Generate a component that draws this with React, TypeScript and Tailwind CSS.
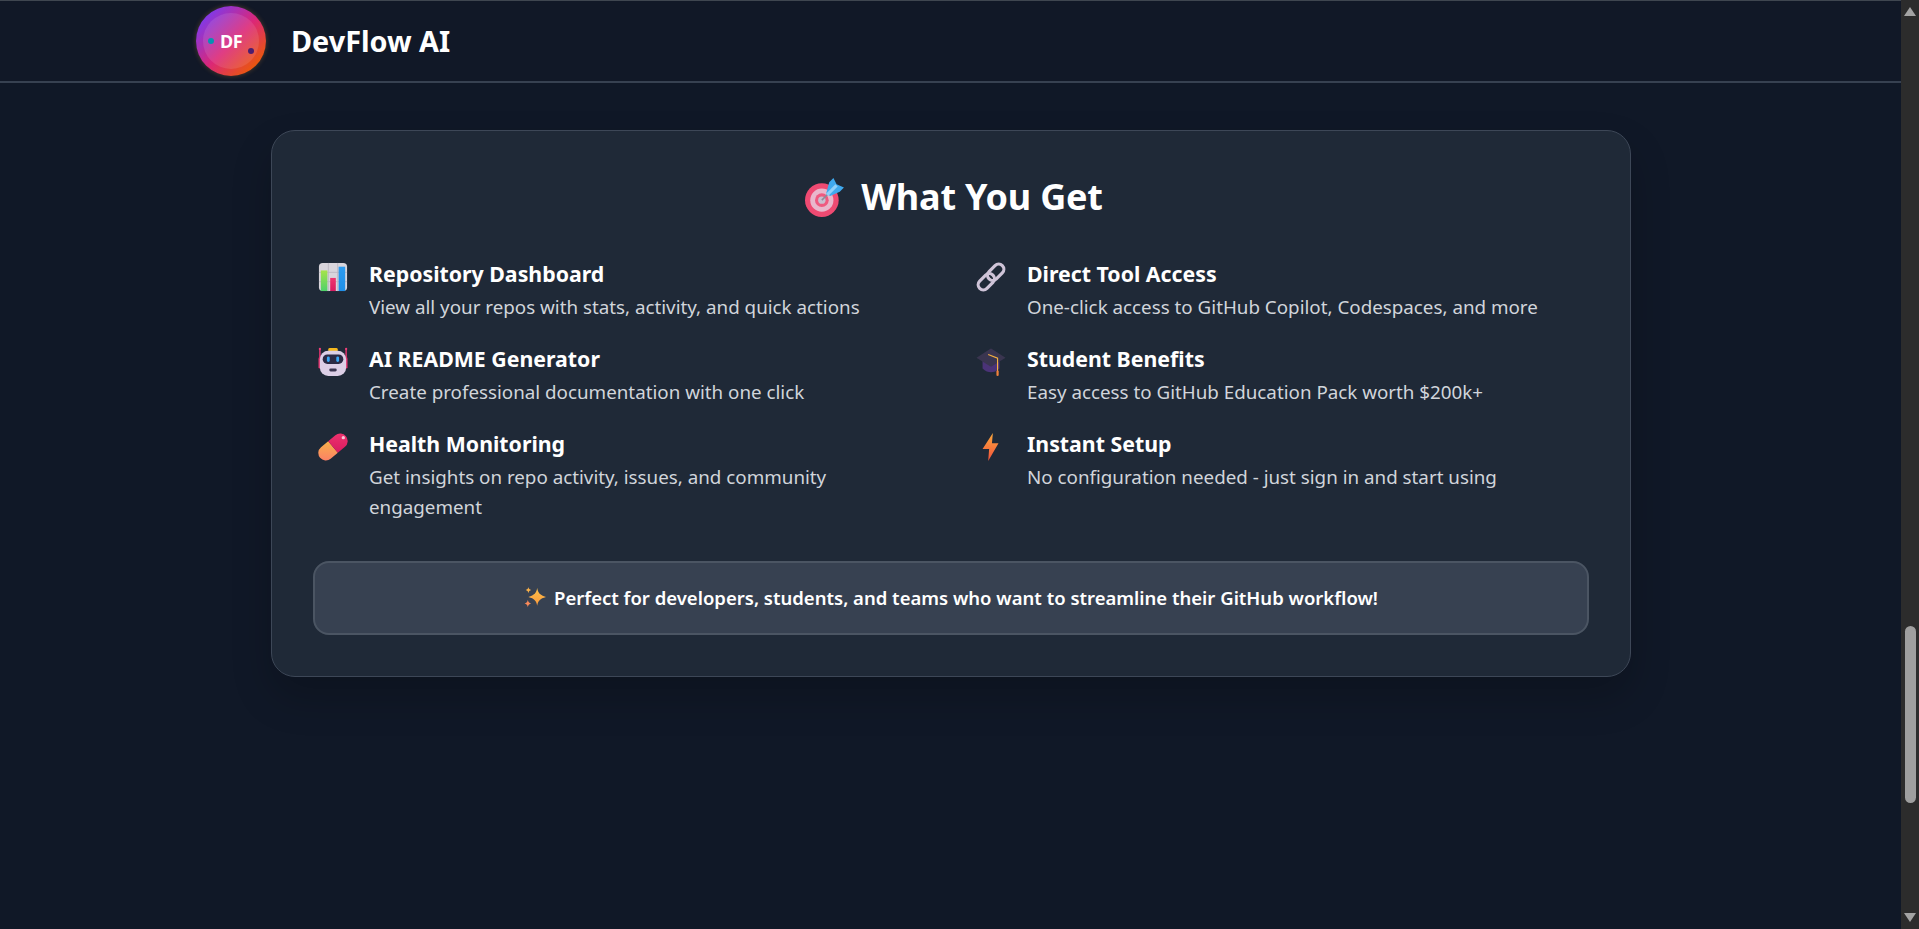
import React from "react";

const ChartIcon = () => (
  <svg width="30" height="30" viewBox="0 0 32 32">
    <rect x="1" y="1" width="30" height="30" rx="4" fill="#d9d5dc" />
    <path d="M1 11h30M1 21h30M11 1v30M21 1v30" stroke="#bdb8c2" strokeWidth="1" />
    <defs>
      <linearGradient id="g1" x1="0" y1="0" x2="0" y2="1"><stop offset="0" stopColor="#a6e34a" /><stop offset="1" stopColor="#4fd16a" /></linearGradient>
      <linearGradient id="g2" x1="0" y1="0" x2="0" y2="1"><stop offset="0" stopColor="#f0356f" /><stop offset="1" stopColor="#d81b60" /></linearGradient>
      <linearGradient id="g3" x1="0" y1="0" x2="0" y2="1"><stop offset="0" stopColor="#2d9cf0" /><stop offset="1" stopColor="#1f8fe8" /></linearGradient>
    </defs>
    <rect x="3" y="9" width="7" height="22" fill="url(#g1)" />
    <rect x="13" y="17" width="6" height="14" fill="url(#g2)" />
    <rect x="22" y="5" width="7" height="26" fill="url(#g3)" />
  </svg>
);

const RobotIcon = () => (
  <svg width="30" height="30" viewBox="0 0 32 32">
    <rect x="11" y="1" width="10" height="4" rx="1.5" fill="#f5b81e" />
    <path d="M2 2v10M30 2v10" stroke="#e0336e" strokeWidth="1.6" />
    <circle cx="2" cy="2" r="1.2" fill="#f0407a" />
    <circle cx="30" cy="2" r="1.2" fill="#f0407a" />
    <rect x="0.5" y="11" width="4" height="12" rx="1.5" fill="#e0336e" />
    <rect x="27.5" y="11" width="4" height="12" rx="1.5" fill="#e0336e" />
    <rect x="2" y="4" width="28" height="27" rx="9" fill="#dccfe6" />
    <rect x="5" y="8" width="22" height="10" rx="5" fill="#2b2a44" />
    <rect x="9.5" y="10" width="3" height="6" rx="1.5" fill="#38a6f5" />
    <rect x="19.5" y="10" width="3" height="6" rx="1.5" fill="#38a6f5" />
    <rect x="12" y="23" width="8" height="3" rx="1.5" fill="#3a3550" />
  </svg>
);

const PillIcon = () => (
  <svg width="30" height="30" viewBox="0 0 32 32">
    <defs>
      <linearGradient id="p1" x1="0" y1="1" x2="1" y2="0"><stop offset="0" stopColor="#fb7a6a" /><stop offset="1" stopColor="#f9b04a" /></linearGradient>
      <linearGradient id="p2" x1="0" y1="1" x2="1" y2="0"><stop offset="0" stopColor="#d81b60" /><stop offset="1" stopColor="#f0356f" /></linearGradient>
    </defs>
    <g transform="rotate(-40 16 16)">
      <path d="M16 8H6a8 8 0 0 0 0 16h10z" fill="url(#p1)" />
      <path d="M16 8h10a8 8 0 0 1 0 16H16z" fill="url(#p2)" />
    </g>
    <circle cx="27" cy="6" r="1.800" fill="#f8c6d8" />
  </svg>
);

const LinkIcon = () => (
  <svg width="30" height="30" viewBox="0 0 32 32" fill="none" stroke="#cfc4d8" strokeWidth="3.4">
    <rect x="11" y="5.500" width="20" height="11" rx="5.500" transform="rotate(-45 21 11)" />
    <rect x="1" y="15.500" width="20" height="11" rx="5.500" transform="rotate(-45 11 21)" />
  </svg>
);

const CapIcon = () => (
  <svg width="30" height="30" viewBox="0 0 32 32">
    <path d="M7 13v10c3 3 6 4 9 4s6-1 9-4V13z" fill="#4b3378" />
    <path d="M0.500 11.500 15 2a2 2 0 0 1 2 0l14.500 9.500L17 20.500a2 2 0 0 1-2 0z" fill="#3a3550" />
    <path d="M13 8l10 4v14" stroke="#f5b040" strokeWidth="1.200" fill="none" />
    <rect x="21.800" y="25" width="2.400" height="6" rx="1.200" fill="#f0803c" />
  </svg>
);

const BoltIcon = () => (
  <svg width="30" height="30" viewBox="0 0 32 32">
    <defs>
      <linearGradient id="b1" x1="0" y1="0" x2="0" y2="1"><stop offset="0" stopColor="#fba93c" /><stop offset="1" stopColor="#f2503c" /></linearGradient>
    </defs>
    <path d="M18 1 7 18h7l-1 13 11-19h-7z" fill="url(#b1)" />
  </svg>
);

const TargetIcon = () => (
  <svg width="40" height="40" viewBox="0 0 38 38">
    <circle cx="16" cy="22" r="16" fill="#ef4a72" />
    <circle cx="16" cy="22" r="11" fill="#e9b7cc" />
    <circle cx="16" cy="22" r="6.500" fill="#ef5a80" />
    <circle cx="16" cy="22" r="3.500" fill="#c9bfd0" />
    <path d="M16 22 28 10" stroke="#8e8a9a" strokeWidth="1.500" />
    <path d="M20 16 23 5 27 1 30 7 37 10 33 14 24 18z" fill="#3fa9ee" />
    <path d="M21 17 30 8" stroke="#8fd0fa" strokeWidth="3" />
  </svg>
);

const SparkleIcon = () => (
  <svg width="22" height="22" viewBox="0 0 20 20">
    <defs>
      <linearGradient id="s1" x1="0" y1="0" x2="0" y2="1"><stop offset="0" stopColor="#fdc04a" /><stop offset="1" stopColor="#fb9a3c" /></linearGradient>
    </defs>
    <path d="M12 1c.8 4.500 2.500 6.500 8 8-5.500 1.500-7.200 3.500-8 8-.8-4.500-2.500-6.500-8-8 5.500-1.500 7.200-3.500 8-8z" fill="url(#s1)" />
    <path d="M4 0c.3 1.600 1 2.300 2.500 2.800C5 3.300 4.300 4 4 5.600 3.700 4 3 3.300 1.500 2.800 3 2.300 3.700 1.600 4 0z" fill="#fbb24a" />
    <path d="M3.500 11.500c.3 2 1.200 2.800 3 3.400-1.800.6-2.700 1.400-3 3.400-.3-2-1.200-2.800-3-3.400 1.800-.6 2.700-1.400 3-3.400z" fill="#f98a5a" />
  </svg>
);

const features = [
  { icon: <ChartIcon />, title: "Repository Dashboard", text: "View all your repos with stats, activity, and quick actions" },
  { icon: <LinkIcon />, title: "Direct Tool Access", text: "One-click access to GitHub Copilot, Codespaces, and more" },
  { icon: <RobotIcon />, title: "AI README Generator", text: "Create professional documentation with one click" },
  { icon: <CapIcon />, title: "Student Benefits", text: "Easy access to GitHub Education Pack worth $200k+" },
  { icon: <PillIcon />, title: "Health Monitoring", text: "Get insights on repo activity, issues, and community engagement" },
  { icon: <BoltIcon />, title: "Instant Setup", text: "No configuration needed - just sign in and start using" },
];

export default function App() {
  return (
    <div className="h-screen flex overflow-hidden bg-[#101827] text-white font-['Noto_Sans',sans-serif]">
      <div className="flex-1 min-w-0 flex flex-col">
        <header className="h-[83px] shrink-0 bg-[#111827] border-t border-[#3f4650] border-b-2 border-b-[#374151] flex items-center pl-[196px]">
          <div className="relative w-[70px] h-[70px] rounded-full bg-[linear-gradient(135deg,#6d3bf0_0%,#7c3aed_12%,#db2777_52%,#ea580c_86%,#a8791f_100%)] shadow-[0_0_5px_rgba(234,150,60,0.3)] flex items-center justify-center">
            <div className="absolute inset-[7px] rounded-full bg-white/10" />
            <span className="relative text-[18px] font-bold tracking-[-0.5px]">DF</span>
            <span className="absolute left-[12px] top-[32px] w-[6px] h-[6px] rounded-full bg-[#0891b2]" />
            <span className="absolute left-[52px] top-[42px] w-[6px] h-[6px] rounded-full bg-[#4c1d6e]" />
          </div>
          <div className="ml-[25px] text-[28.8px] font-bold leading-none">DevFlow AI</div>
        </header>
        <main className="flex-1 pt-[47px] pl-[271px]">
          <section className="w-[1360px] h-[547px] rounded-[24px] bg-[#1f2937] border border-[#3d4757] shadow-[0_20px_40px_rgba(0,0,0,0.2)] px-[41px] pt-[42px]">
            <h2 className="flex items-center justify-center gap-[16px] pl-[6px] h-[48px] text-[36px] font-bold tracking-[-0.2px] leading-none">
              <TargetIcon />
              <span>What You Get</span>
            </h2>
            <div className="grid grid-cols-2 gap-x-[40px] mt-[38px]">
              {features.map((f) => (
                <div key={f.title} className="flex min-h-[85px]">
                  <div className="w-[56px] shrink-0 pl-[5px] pt-[3px]">{f.icon}</div>
                  <div>
                    <div className="text-[21.3px] font-bold leading-[30px]">{f.title}</div>
                    <div className="text-[18.8px] leading-[30px] text-[#d1d5db] mt-[3px] max-w-[520px]">{f.text}</div>
                  </div>
                </div>
              ))}
            </div>
            <div className="mt-[39px] h-[74px] rounded-[16px] bg-[#374151] border-2 border-[#4b5563] flex items-center justify-center gap-[8px] text-[18.5px] font-semibold">
              <SparkleIcon />
              <span>Perfect for developers, students, and teams who want to streamline their GitHub workflow!</span>
            </div>
          </section>
        </main>
      </div>
      <div className="relative w-[18px] shrink-0 bg-[#2c2c2c]">
        <svg className="absolute left-[3px] top-[7px]" width="12" height="9" viewBox="0 0 12 9"><path d="M6 0l6 9H0z" fill="#a3a3a3" /></svg>
        <div className="absolute left-[4px] top-[626px] w-[11px] h-[177px] rounded-full bg-[#9f9f9f]" />
        <svg className="absolute left-[3px] bottom-[7px]" width="12" height="9" viewBox="0 0 12 9"><path d="M6 9l6-9H0z" fill="#a3a3a3" /></svg>
      </div>
    </div>
  );
}
